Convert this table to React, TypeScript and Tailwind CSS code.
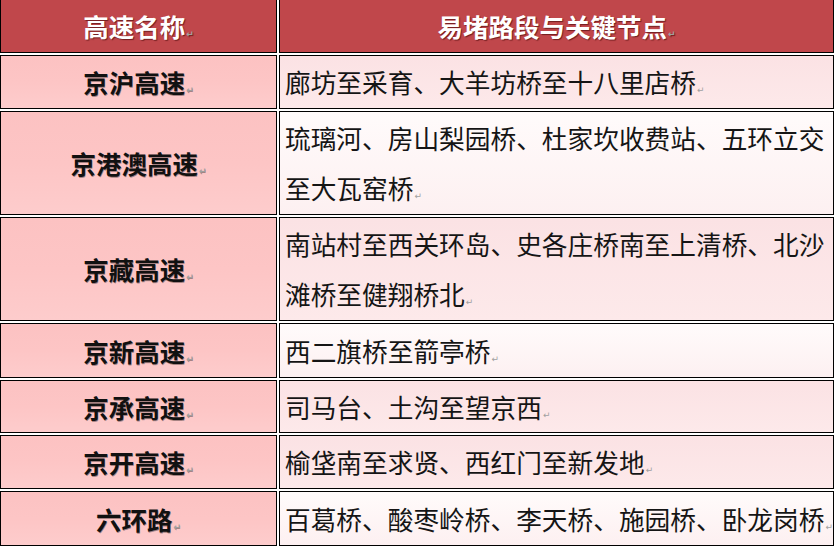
import React from "react"

type Row = { name: string; lines: string[]; h: string; tone: "pink" | "white" }

const rows: Row[] = [
  { name: "京沪高速", lines: ["廊坊至采育、大羊坊桥至十八里店桥"], h: "h-[54px]", tone: "pink" },
  { name: "京港澳高速", lines: ["琉璃河、房山梨园桥、杜家坎收费站、五环立交", "至大瓦窑桥"], h: "h-[104px]", tone: "white" },
  { name: "京藏高速", lines: ["南站村至西关环岛、史各庄桥南至上清桥、北沙", "滩桥至健翔桥北"], h: "h-[104px]", tone: "pink" },
  { name: "京新高速", lines: ["西二旗桥至箭亭桥"], h: "h-[55px]", tone: "white" },
  { name: "京承高速", lines: ["司马台、土沟至望京西"], h: "h-[53px]", tone: "pink" },
  { name: "京开高速", lines: ["榆垡南至求贤、西红门至新发地"], h: "h-[54px]", tone: "pink" },
  { name: "六环路", lines: ["百葛桥、酸枣岭桥、李天桥、施园桥、卧龙岗桥"], h: "h-[55px]", tone: "white" },
]

// Word paragraph mark
const Mark = () => (
  <span className="ml-[1px] text-[9px] leading-none text-[#a0a0a0] font-['DejaVu_Sans',sans-serif] align-baseline">↵</span>
)

export default function App() {
  return (
    <div className="w-[834px] h-[547px] bg-white overflow-hidden font-['Noto_Sans_CJK_SC','Noto_Sans',sans-serif]">
      <div className="grid grid-cols-[277px_555px] gap-[2px]">
        {/* header */}
        <div className="h-[53px] border-x border-b border-black bg-[#c0474b] flex items-center justify-center">
          <span className="text-white font-bold text-[25.5px] leading-none [text-shadow:1px_1px_1px_rgba(60,0,0,0.6)]">
            高速名称<Mark />
          </span>
        </div>
        <div className="h-[53px] border-x border-b border-black bg-[#c0474b] flex items-center justify-center">
          <span className="text-white font-bold text-[25.5px] leading-none [text-shadow:1px_1px_1px_rgba(60,0,0,0.6)]">
            易堵路段与关键节点<Mark />
          </span>
        </div>

        {rows.map(r => (
          <React.Fragment key={r.name}>
            <div className={r.h + " border border-black bg-gradient-to-b from-[#fcc2c2] via-[#fdc5c5] to-[#fdcccc] flex items-center justify-center"}>
              <span className="font-bold text-[25.5px] leading-none text-[#111] [text-shadow:0.5px_0.5px_0.5px_rgba(0,0,0,0.35)]">
                {r.name}<Mark />
              </span>
            </div>
            <div className={r.h + " border border-black flex items-center pl-[5px] overflow-hidden " +
              (r.tone === "pink"
                ? "bg-gradient-to-b from-[#fbe2e4] to-[#fde9ea]"
                : "bg-gradient-to-b from-[#fffbfb] to-[#fdf0f1]")}>
              <div className="text-[25.7px] leading-[50px] text-[#151515] whitespace-nowrap">
                {r.lines.map((l, i) => (
                  <div key={i}>
                    {l}{i === r.lines.length - 1 && <Mark />}
                  </div>
                ))}
              </div>
            </div>
          </React.Fragment>
        ))}
      </div>
    </div>
  )
}
